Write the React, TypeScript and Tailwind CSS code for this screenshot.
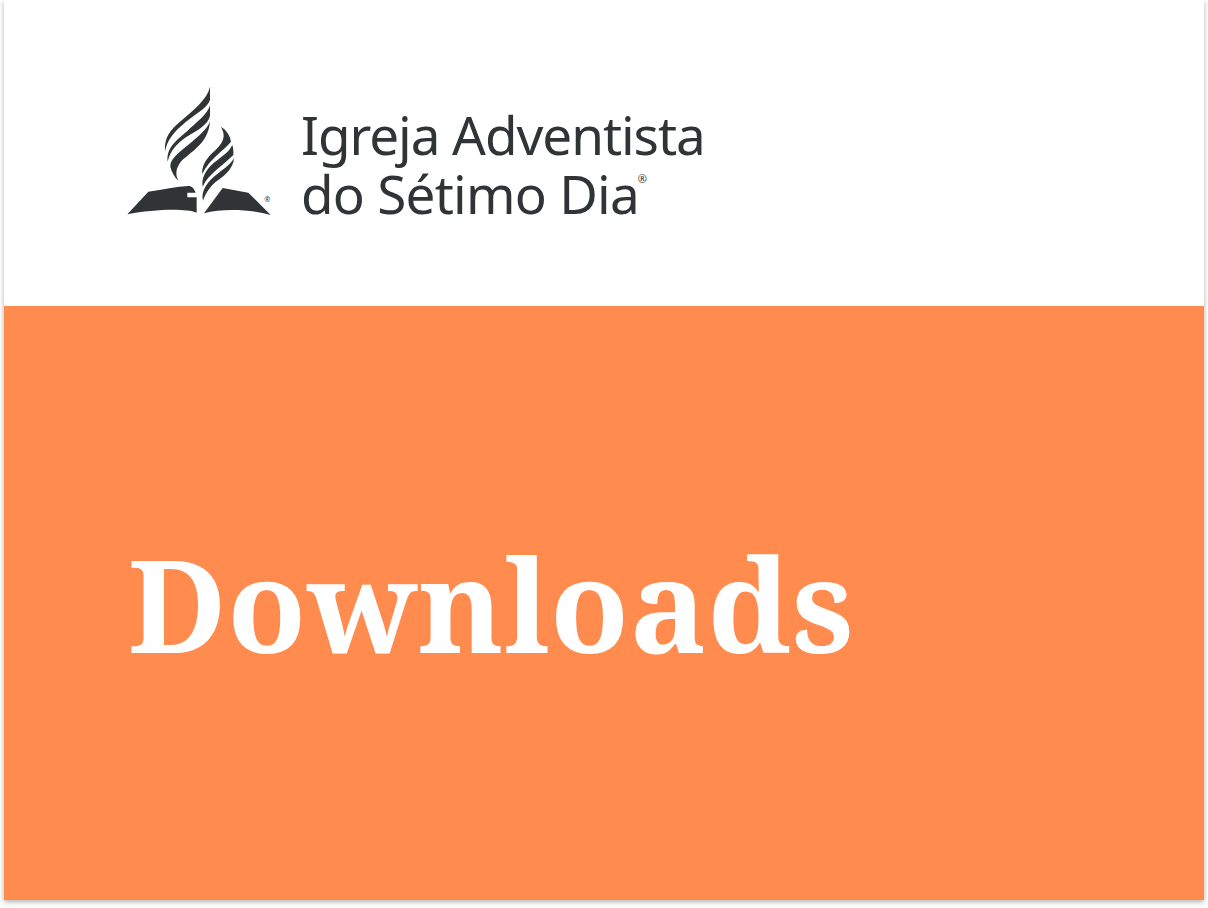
export default function App() {
  return (
    <div className="h-[908px] w-[1208px] bg-white">
      <div className="mx-1 flex h-[900px] w-[1200px] flex-col bg-white shadow-[0_2px_5px_rgba(0,0,0,0.3)]">
        <header className="flex h-[306px] items-start pl-[106px] pt-[70px]">
          <svg width="180" height="160" viewBox="0 0 540 480" className="shrink-0">
            <g fill="#303437">
              {/* left flame */}
              <path d="M300 50C292 88 250 120 210 155C182 180 162 200 165 245C172 208 192 186 227 156C259 130 292 114 300 90Z" />
              <path d="M300 106C292 134 258 158 232 183C202 209 168 232 173 275C181 243 198 223 228 202C256 184 294 166 300 138Z" />
              <path d="M300 154C292 178 264 200 237 223C210 246 180 265 181 290C185 306 194 322 205 332C194 310 200 292 212 276C240 246 296 222 300 154Z" />
              {/* right flame */}
              <path d="M332 170C348 178 360 196 363 215C340 244 296 268 277 312C274 290 288 268 306 250C332 226 354 204 332 170Z" />
              <path d="M367 225C370 235 371 246 370 255C342 284 294 312 278 350C273 324 288 300 310 280C334 260 356 248 367 225Z" />
              <path d="M372 265C370 294 346 316 325 330C302 346 288 368 279 392C272 366 290 340 310 322C335 300 358 288 372 265Z" />
              {/* open book */}
              <path d="M52 433L115 365C160 358 200 350 235 348C246 348 252 356 257 368H232V382H260V428C225 414 130 418 52 433Z" />
              <path d="M282 430L338 354L415 368L482 435C420 418 340 414 282 430Z" />
            </g>
            <text x="463" y="396" fill="#303437" fontSize="22" fontFamily="Noto Sans, sans-serif">®</text>
          </svg>
          <div className="ml-4 -translate-x-[5px] pt-[35px] font-['Noto_Sans',sans-serif] text-[53px] leading-[59px] text-[#303437]">
            <div className="tracking-[-1.05px]">Igreja Adventista</div>
            <div className="relative w-fit tracking-[-0.75px]">
              do Sétimo Dia
              <span className="absolute -right-2 top-[9px] text-[11px] leading-none tracking-normal">®</span>
            </div>
          </div>
        </header>
        <main className="flex flex-1 items-center bg-[#ff8b4e] pl-[124px]">
          <h1 className="font-['Noto_Serif','DejaVu_Serif',serif] text-[129px] font-bold leading-none tracking-[0.4px] text-white">Downloads</h1>
        </main>
      </div>
    </div>
  );
}
